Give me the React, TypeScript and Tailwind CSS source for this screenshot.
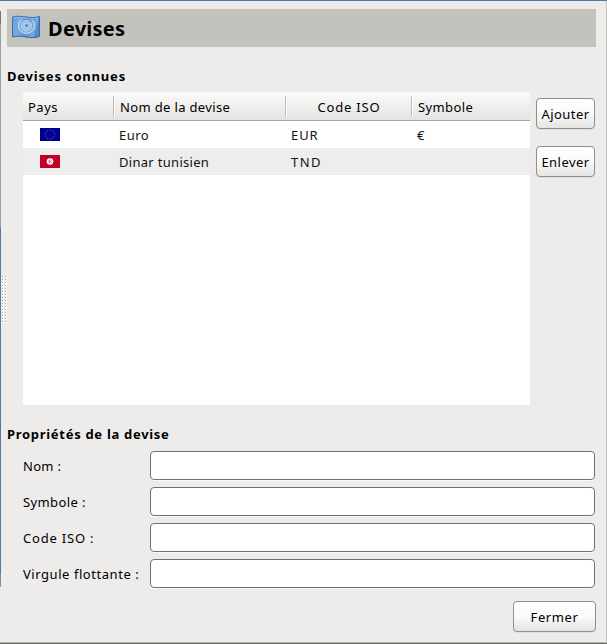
import type { ReactNode } from "react";

const dots = Array.from({ length: 16 }, (_, i) => i);
const stars = Array.from({ length: 12 }, (_, i) => {
  const a = (i * Math.PI) / 6;
  return { x: 10 + 4.7 * Math.sin(a), y: 6.5 - 4.7 * Math.cos(a) };
});

function UnFlag() {
  return (
    <svg className="block h-6 w-[30px] shrink-0" viewBox="0 0 30 24">
      <defs>
        <linearGradient id="cloth" x1="0" x2="1" y1="0" y2="0.2">
          <stop offset="0" stopColor="#6b9fd9" />
          <stop offset="0.3" stopColor="#7aaadd" />
          <stop offset="0.65" stopColor="#5c92d0" />
          <stop offset="0.9" stopColor="#76a8df" />
          <stop offset="1" stopColor="#5087c9" />
        </linearGradient>
      </defs>
      <path
        d="M1.5 2 C6 0.8 10 1.3 15 2 S24 2.8 28.5 1.5 V21.5 C24 23 20 23 15 22 S6 20.8 1.5 22 Z"
        fill="url(#cloth)"
        stroke="#386cad"
      />
      <path d="M2.5 3 C7 2 11 2.4 15 3 S24 3.8 27.5 2.8" fill="none" stroke="#9fc4ec" strokeWidth="0.7" />
      <circle cx="15.5" cy="11" r="6" fill="#8fb9e4" />
      <g fill="none" stroke="#b9d5ef">
        <circle cx="15.5" cy="10.8" r="5" strokeWidth="1" />
        <circle cx="15.5" cy="10.8" r="2.8" strokeWidth="0.8" />
        <path d="M10.5 4.8 C5.5 9 6.8 16.8 15.5 18.5 C24.2 16.8 25.5 9 20.5 4.8" strokeWidth="1.5" />
        <path d="M15.5 5.6 V16 M10.3 10.8 H20.7 M12 7.3 L19 14.3 M19 7.3 L12 14.3" strokeWidth="0.5" />
      </g>
      <circle cx="15.7" cy="10.5" r="1.3" fill="#447bb8" />
    </svg>
  );
}

function EuFlag() {
  return (
    <svg className="block h-[13px] w-5" viewBox="0 0 20 13">
      <rect width="20" height="13" fill="#000099" />
      {stars.map((s, i) => (
        <circle key={i} cx={s.x} cy={s.y} r="0.5" fill="#8d8052" />
      ))}
    </svg>
  );
}

function TnFlag() {
  return (
    <svg className="block h-[13px] w-5" viewBox="0 0 20 13">
      <rect width="20" height="13" fill="#c00025" />
      <circle cx="10" cy="6.5" r="3.3" fill="#fff" />
      <circle cx="10.3" cy="6.5" r="2" fill="#dc6f84" />
      <circle cx="10.8" cy="6.5" r="1.3" fill="#fff" />
      <circle cx="10.6" cy="6.5" r="0.6" fill="#d0405a" />
    </svg>
  );
}

function Button({ className, children }: { className: string; children: ReactNode }) {
  return (
    <button
      className={`flex h-[31px] shrink-0 items-center justify-center whitespace-nowrap rounded-[4px] border border-[#918f8c] bg-linear-to-b from-white via-[#fafafa] to-[#e5e4e2] shadow-[0_1px_0_#e0dfdd] ${className}`}
    >
      {children}
    </button>
  );
}

function Field({ label, className }: { label: string; className: string }) {
  return (
    <label className="flex h-[29px] items-center">
      <span className={`w-[127px] shrink-0 whitespace-nowrap pt-px ${className}`}>{label}</span>
      <input className="h-[29px] w-[445px] rounded-[4px] border border-[#73706c] bg-white shadow-[0_1px_0_#f8f8f7] outline-none" />
    </label>
  );
}

function Splitter() {
  return (
    <div className="flex w-[7px] shrink-0">
      <div className="flex w-px flex-col">
        <div className="h-[10px]" />
        <div className="h-[13px] bg-[#777572]" />
        <div className="h-[204px] bg-[#a09d99]" />
        <div className="h-[346px] bg-[#5379ac]" />
        <div className="h-[13px] bg-[#8e8a86]" />
      </div>
      <div className="mt-[275px] ml-px flex flex-col gap-px">
        {dots.map((i) => (
          <div key={i} className="flex gap-px">
            <div className="size-0.5 border-r border-b border-white bg-[#aaa7a3]" />
            <div className="size-0.5 border-r border-b border-white bg-[#aaa7a3]" />
          </div>
        ))}
      </div>
    </div>
  );
}

const columns = "grid grid-cols-[91px_172px_126px_118px] items-center";

export default function App() {
  return (
    <div className="flex h-[644px] w-[607px] flex-col overflow-hidden bg-[#edeceb] font-['Noto_Sans','Open_Sans',sans-serif] text-[13px] leading-[18px] text-[#111]">
      <div className="h-px shrink-0 bg-[#4a76ad]" />
      <div className="flex h-[641px] shrink-0 border-r border-[#c4c3c1]">
        <Splitter />
        <main className="flex w-[589px] flex-col pt-2">
          <header className="flex h-[38px] shrink-0 items-center bg-[#c4c2bc] pl-1">
            <div className="-mt-0.5">
              <UnFlag />
            </div>
            <h1 className="mt-px ml-[7px] text-[20px] leading-7 font-bold tracking-[0.25px] text-black">Devises</h1>
          </header>

          <h2 className="mt-5 h-[18px] font-bold tracking-[0.8px] text-black">Devises connues</h2>
          <section className="mt-[7px] flex h-[313px] shrink-0 pl-4">
            <div className="w-[507px] bg-white">
              <div className={`${columns} h-[29px] border-b border-[#a8a6a2] bg-linear-to-b from-[#fbfbfa] to-[#e4e3e1] text-black`}>
                <div className="h-[21px] border-r border-[#bfbdb9] pl-[5px] leading-[22px] tracking-[0.5px]">Pays</div>
                <div className="h-[21px] border-r border-[#bfbdb9] border-l border-l-white pl-[5px] leading-[22px] tracking-[0.35px]">Nom de la devise</div>
                <div className="h-[21px] border-r border-[#bfbdb9] border-l border-l-white text-center leading-[22px] tracking-[0.8px]">Code ISO</div>
                <div className="h-[21px] border-l border-l-white pl-[5px] leading-[22px] tracking-[0.4px]">Symbole</div>
              </div>
              <div className={`${columns} h-[27px]`}>
                <div className="pl-[17px]"><EuFlag /></div>
                <div className="pl-[5px] tracking-[0.5px]">Euro</div>
                <div className="pl-[5px] tracking-[0.9px]">EUR</div>
                <div className="pl-[5px]">€</div>
              </div>
              <div className={`${columns} h-[27px] bg-[#ededed]`}>
                <div className="pl-[17px]"><TnFlag /></div>
                <div className="pl-[5px] tracking-[0.3px]">Dinar tunisien</div>
                <div className="pl-[5px] tracking-[1.4px]">TND</div>
                <div />
              </div>
            </div>
            <div className="ml-1.5 flex flex-col gap-[17px] pt-[6px] text-black">
              <Button className="w-[59px] tracking-[0.45px]">Ajouter</Button>
              <Button className="w-[59px] tracking-[0.45px]">Enlever</Button>
            </div>
          </section>

          <h2 className="mt-5 h-[18px] font-bold tracking-[0.7px] text-black">Propriétés de la devise</h2>
          <section className="mt-2 flex flex-col gap-[7px] pl-4 text-black">
            <Field label="Nom :" className="tracking-[0.3px]" />
            <Field label="Symbole :" className="tracking-[0.4px]" />
            <Field label="Code ISO :" className="tracking-[0.8px]" />
            <Field label="Virgule flottante :" className="tracking-[0.55px]" />
          </section>
          <footer className="mt-[13px] flex justify-end text-black">
            <Button className="w-[83px] tracking-[0.6px]">Fermer</Button>
          </footer>
        </main>
      </div>
      <div className="h-px shrink-0 bg-[#b4b2af]" />
      <div className="h-px shrink-0 bg-[#696765]" />
    </div>
  );
}
